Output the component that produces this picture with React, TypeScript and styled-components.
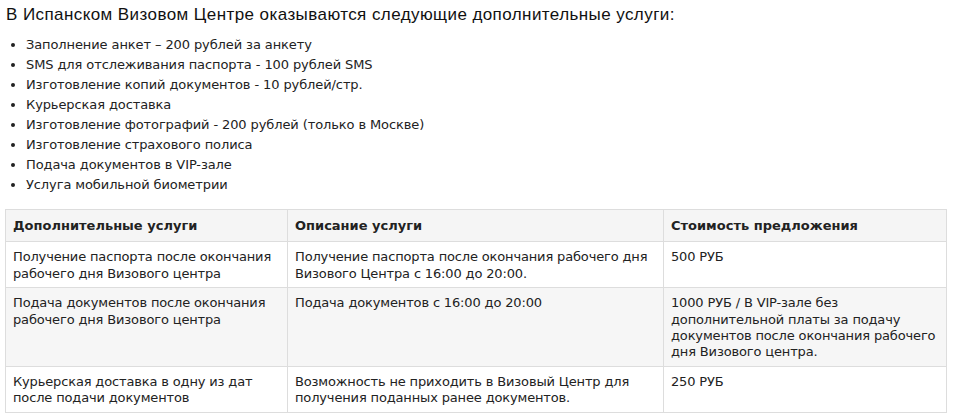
import React from "react";
import styled, { createGlobalStyle } from "styled-components";

const Global = createGlobalStyle`
  html, body { margin: 0; padding: 0; background: #fff; }
  body { font-family: Verdana, "DejaVu Sans", sans-serif; color: #222; }
`;

const Page = styled.div`
  width: 941px;
  padding: 0 0 0 5px;
`;

const Title = styled.h3`
  margin: 0;
  padding: 5px 0 0 1px;
  font-family: "Liberation Sans", Arial, sans-serif;
  font-weight: 400;
  font-size: 17px;
  letter-spacing: 0.42px;
  line-height: 20px;
  color: #111;
`;

const List = styled.ul`
  margin: 10px 0 0;
  padding: 0 0 0 21px;
  font-size: 13px;
  line-height: 20px;
  letter-spacing: -0.1px;
  list-style: disc;
`;

const Item = styled.li`
  padding-left: 0;
`;

const Table = styled.table`
  margin-top: 14px;
  width: 941px;
  border-collapse: collapse;
  table-layout: fixed;
  font-size: 13px;
  line-height: 16.4px;
`;

const Th = styled.th<{ $w: number }>`
  box-sizing: border-box;
  width: ${(p) => p.$w}px;
  text-align: left;
  font-weight: 700;
  background: #f5f5f5;
  border: 1px solid #ddd;
  padding: 8px 7px 7px;
  vertical-align: top;
`;

const Row = styled.tr<{ $alt?: boolean }>`
  background: ${(p) => (p.$alt ? "#f6f6f6" : "#fff")};
`;

const Td = styled.td`
  border: 1px solid #ddd;
  padding: 7px 7px 5px;
  vertical-align: top;
  letter-spacing: -0.15px;
`;

const items = [
  "Заполнение анкет – 200 рублей за анкету",
  "SMS для отслеживания паспорта - 100 рублей SMS",
  "Изготовление копий документов - 10 рублей/стр.",
  "Курьерская доставка",
  "Изготовление фотографий - 200 рублей (только в Москве)",
  "Изготовление страхового полиса",
  "Подача документов в VIP-зале",
  "Услуга мобильной биометрии",
];

const rows = [
  [
    "Получение паспорта после окончания рабочего дня Визового центра",
    "Получение паспорта после окончания рабочего дня Визового Центра с 16:00 до 20:00.",
    "500 РУБ",
  ],
  [
    "Подача документов после окончания рабочего дня Визового центра",
    "Подача документов с 16:00 до 20:00",
    "1000 РУБ / В VIP-зале без дополнительной платы за подачу документов после окончания рабочего дня Визового центра.",
  ],
  [
    "Курьерская доставка в одну из дат после подачи документов",
    "Возможность не приходить в Визовый Центр для получения поданных ранее документов.",
    "250 РУБ",
  ],
];

export default function App() {
  return (
    <Page>
      <Global />
      <Title>В Испанском Визовом Центре оказываются следующие дополнительные услуги:</Title>
      <List>
        {items.map((t) => (
          <Item key={t}>{t}</Item>
        ))}
      </List>
      <Table>
        <thead>
          <tr>
            <Th $w={282}>Дополнительные услуги</Th>
            <Th $w={376}>Описание услуги</Th>
            <Th $w={283}>Стоимость предложения</Th>
          </tr>
        </thead>
        <tbody>
          {rows.map((r, i) => (
            <Row key={i} $alt={i % 2 === 1}>
              {r.map((c, j) => (
                <Td key={j}>{c}</Td>
              ))}
            </Row>
          ))}
        </tbody>
      </Table>
    </Page>
  );
}
